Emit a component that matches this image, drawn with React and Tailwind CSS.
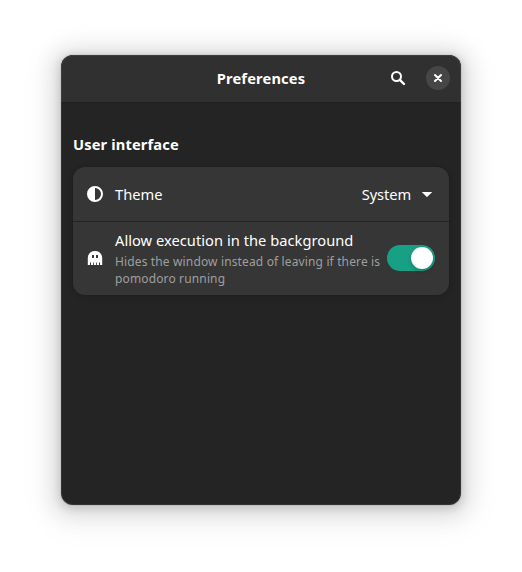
const SearchIcon = () => (
  <svg width="16" height="16" viewBox="0 0 16 16" fill="none" stroke="#fff" strokeWidth="2">
    <circle cx="6.5" cy="6.5" r="4.5" />
    <path d="M9.8 9.8L14 14" strokeWidth="2.400" strokeLinecap="round" />
  </svg>
);

const CloseIcon = () => (
  <svg width="16" height="16" viewBox="0 0 16 16" fill="none" stroke="#fff" strokeWidth="2" strokeLinecap="round">
    <path d="M5 5l6 6M11 5l-6 6" />
  </svg>
);

const ContrastIcon = () => (
  <svg width="16" height="16" viewBox="0 0 16 16">
    <path fill="#fff" fillRule="evenodd" d="M8 0a8 8 0 1 0 0 16A8 8 0 0 0 8 0zM8 2a6 6 0 0 1 0 12z" />
  </svg>
);

const GhostIcon = () => (
  <svg width="16" height="16" viewBox="0 0 16 16">
    <path
      fill="#fff"
      fillRule="evenodd"
      d="M.8 15V8C.8 3.700 4 1 8 1s7.200 2.700 7.200 7v7h-2.200V12.500h-1V15h-2.200V12.500h-.8V15h-2V12.500h-.8V15h-2.200V12.500h-1V15zM5 5v3h2V5zM9 5v3h2V5z"
    />
  </svg>
);

const CaretIcon = () => (
  <svg width="16" height="16" viewBox="0 0 16 16">
    <path fill="#fff" d="M3.500 6h9c.4 0 .5.300.3.600L8.400 10.800a.6.600 0 0 1-.8 0L3.200 6.600c-.2-.3-.1-.6.300-.6z" />
  </svg>
);

export default function App() {
  return (
    <div className="flex h-[572px] w-[522px] justify-center bg-white pt-[55px] font-['Noto_Sans',sans-serif] text-[14.667px] leading-5 text-white">
      <main className="relative h-[450px] w-[400px] overflow-hidden rounded-xl bg-[#242424] shadow-[0_2px_8px_2px_rgba(0,0,0,0.13),0_3px_20px_10px_rgba(0,0,0,0.09),0_6px_32px_16px_rgba(0,0,0,0.04),0_0_0_1px_rgba(0,0,0,0.05)]">
        <header className="grid h-12 grid-cols-[1fr_auto_1fr] items-center border-b border-[#1f1f1f] bg-[#303030] pb-px">
          <div />
          <h1 className="font-bold tracking-[0.15px]">Preferences</h1>
          <div className="flex items-center justify-end gap-5 pr-[11px]">
            <button aria-label="Search">
              <SearchIcon />
            </button>
            <button aria-label="Close" className="flex size-6 items-center justify-center rounded-full bg-[#464646]">
              <CloseIcon />
            </button>
          </div>
        </header>

        <section className="px-3 pt-[31px]">
          <h2 className="font-bold tracking-[0.14px]">User interface</h2>
          <div className="mt-[13px] rounded-xl bg-[#363636] shadow-[0_0_0_1px_rgba(0,0,0,0.03),0_1px_3px_1px_rgba(0,0,0,0.07),0_2px_6px_2px_rgba(0,0,0,0.03)]">
            <div className="flex h-[55px] items-center border-b border-[#232323] px-3.5">
              <ContrastIcon />
              <span className="ml-3 flex-1">Theme</span>
              <span className="mr-2 tracking-[-0.1px]">System</span>
              <CaretIcon />
            </div>
            <div className="flex h-[73px] items-center px-3.5">
              <div className="mb-px">
                <GhostIcon />
              </div>
              <div className="ml-3 w-[272px] whitespace-nowrap">
                <div className="tracking-[0.03px]">Allow execution in the background</div>
                <p className="mt-[3px] text-[12px] leading-[17px] tracking-[0.14px] text-[#9f9f9f]">
                  Hides the window instead of leaving if there is
                  <br />
                  pomodoro running
                </p>
              </div>
              <div role="switch" aria-checked="true" className="mb-px flex h-[26px] w-12 shrink-0 items-center justify-end rounded-full bg-[#18a085] p-0.5">
                <div className="size-[22px] rounded-full bg-white shadow-[0_2px_4px_rgba(0,0,0,0.2)]" />
              </div>
            </div>
          </div>
        </section>
        <div className="pointer-events-none absolute inset-0 rounded-xl border border-white/7" />
      </main>
    </div>
  );
}
